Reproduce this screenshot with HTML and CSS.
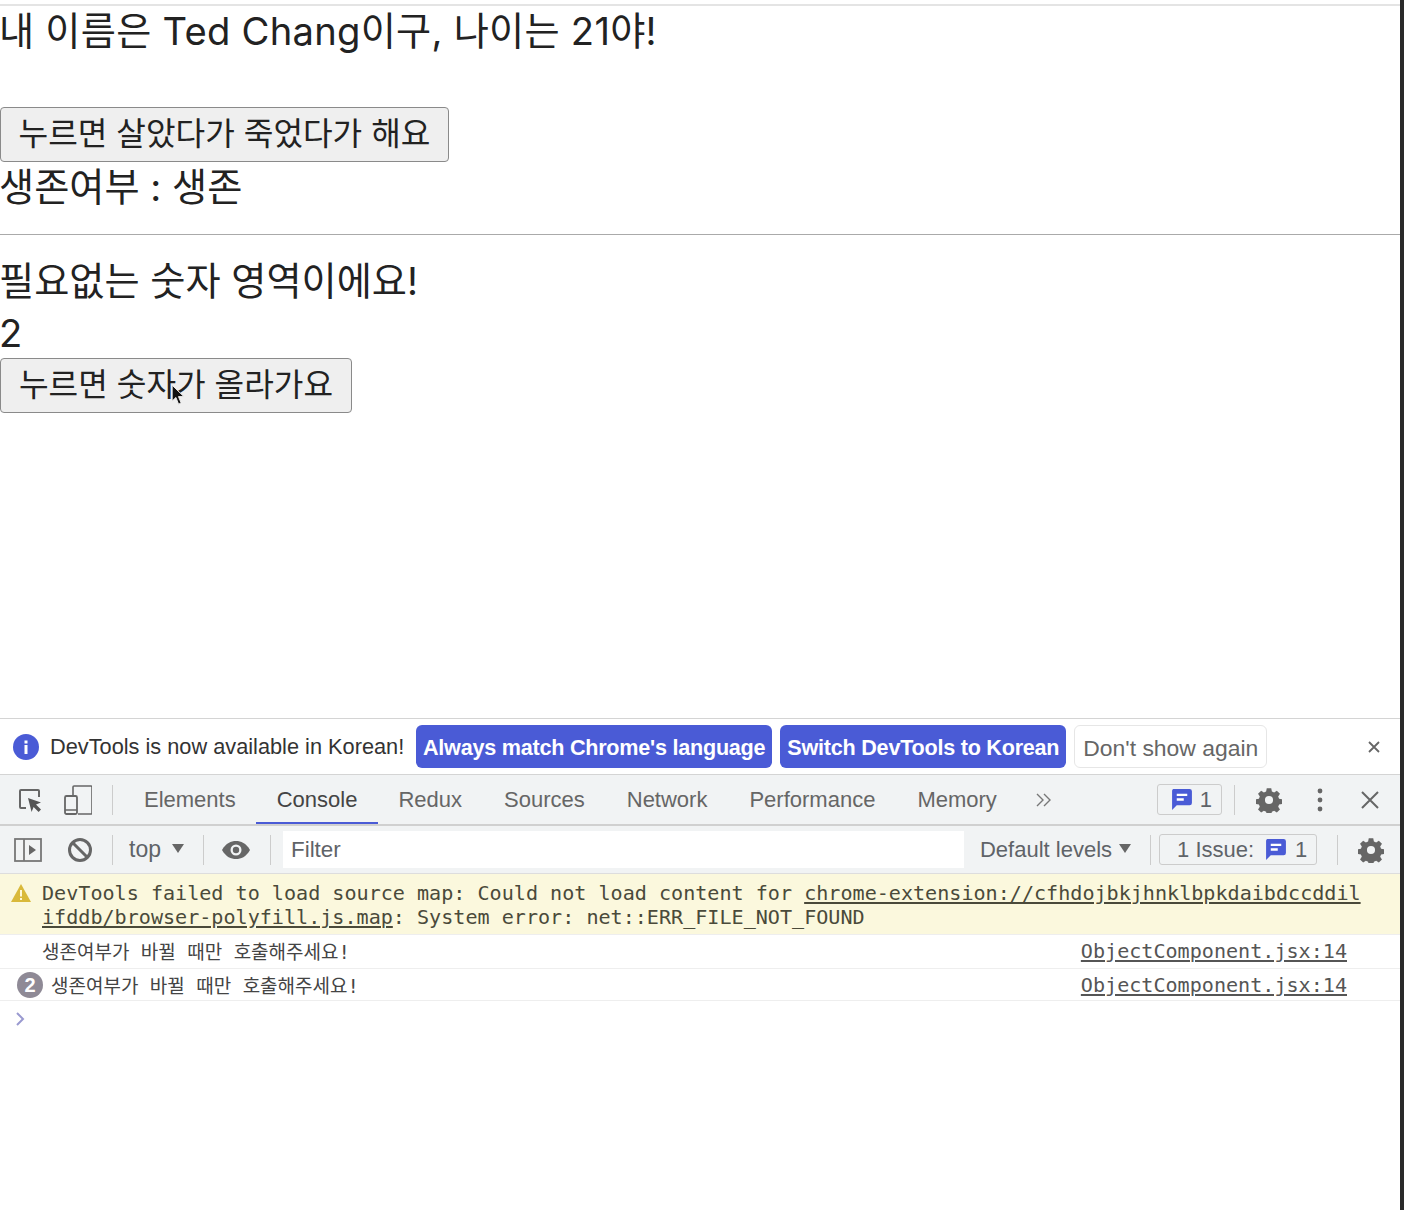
FILE: index.html
```html
<!DOCTYPE html>
<html lang="ko">
<head>
<meta charset="utf-8">
<title>DevTools</title>
<link rel="stylesheet" href="styles.css">
</head>
<body>
<div class="app">
  <main class="page">
    <hr class="rule first">
    <div class="line name">내 이름은 Ted Chang이구, 나이는 21야!</div>
    <button class="btn wide"><span class="btn-label">누르면 살았다가 죽었다가 해요</span></button>
    <div class="line status">생존여부 : 생존</div>
    <hr class="rule second">
    <div class="line note">필요없는 숫자 영역이에요!</div>
    <div class="line count">2</div>
    <button class="btn narrow"><span class="btn-label">누르면 숫자가 올라가요</span><svg class="cursor" viewBox="0 0 12 18" width="14" height="22" preserveAspectRatio="none"><path d="M1 1v13l3.200-3 2.300 5.500 2.200-1-2.300-5.200H11z" fill="#111" stroke="#eee" stroke-width=".8"/></svg></button>
  </main>
  <section class="devtools">
    <div class="infobar">
      <svg class="info-icon" viewBox="0 0 26 26" width="26" height="26"><circle cx="13" cy="13" r="13" fill="#4a5bd6"/><rect x="11.500" y="11" width="3" height="9" fill="#fff"/><rect x="11.500" y="6.500" width="3" height="3" fill="#fff"/></svg>
      <span class="info-text">DevTools is now available in Korean!</span>
      <span class="pill primary">Always match Chrome's language</span>
      <span class="pill primary">Switch DevTools to Korean</span>
      <span class="pill plain">Don't show again</span>
      <svg class="info-close" viewBox="0 0 12 12" width="12" height="12"><path d="M1 1l10 10M11 1L1 11" stroke="#666" stroke-width="1.800"/></svg>
    </div>
    <div class="tabs">
      <svg class="ti inspect" viewBox="0 0 26 26" width="26" height="26"><path d="M9 21H4a1 1 0 0 1-1-1V4a1 1 0 0 1 1-1h17a1 1 0 0 1 1 1v6" fill="none" stroke="#666" stroke-width="2"/><path d="M11 11l13 4.500-5 2 5 5-2.400 2.400-5-5-2 5z" fill="#555"/></svg>
      <svg class="ti device" viewBox="0 0 28 30" width="28" height="30"><path d="M9 10V2a1 1 0 0 1 1-1h17a1 1 0 0 1 1 1v26a1 1 0 0 1-1 1H14" fill="none" stroke="#666" stroke-width="1.600"/><rect x="1" y="11" width="12" height="18" rx="1.500" fill="none" stroke="#666" stroke-width="1.800"/><path d="M1 25h12" stroke="#666" stroke-width="1.500"/></svg>
      <span class="sep tab-sep"></span>
      <span class="tab t1">Elements</span>
      <span class="tab t2 active">Console</span>
      <span class="tab t3">Redux</span>
      <span class="tab t4">Sources</span>
      <span class="tab t5">Network</span>
      <span class="tab t6">Performance</span>
      <span class="tab t7">Memory</span>
      <svg class="more" viewBox="0 0 16 14" width="16" height="14"><path d="M1 1l6 6-6 6M8 1l6 6-6 6" fill="none" stroke="#777" stroke-width="1.400"/></svg>
      <span class="badge">
        <svg viewBox="2 1 17 18" width="20" height="21"><path d="M3 1h14a2 2 0 0 1 2 2v10a2 2 0 0 1-2 2H6l-4 4V3a2 2 0 0 1 1-2z" fill="#4a5bd6"/><path d="M6 6h9M6 10h6" stroke="#fff" stroke-width="2"/></svg>1
      </span>
      <span class="sep badge-sep"></span>
      <svg class="gear g1" viewBox="0 0 26 26" width="26" height="26"><use href="#gear"/></svg>
      <svg class="kebab" viewBox="0 0 6 24" width="6" height="24"><circle cx="3" cy="3" r="2.400" fill="#666"/><circle cx="3" cy="12" r="2.400" fill="#666"/><circle cx="3" cy="21" r="2.400" fill="#666"/></svg>
      <svg class="tab-close" viewBox="0 0 18 18" width="18" height="18"><path d="M1 1l16 16M17 1L1 17" stroke="#666" stroke-width="2"/></svg>
    </div>
    <div class="toolbar">
      <svg class="sidebar" viewBox="0 0 28 24" width="28" height="24"><rect x="1" y="1" width="26" height="22" fill="none" stroke="#777" stroke-width="1.800"/><path d="M10 1v22" stroke="#777" stroke-width="1.800"/><path d="M15 7l7 5-7 5z" fill="#666"/></svg>
      <svg class="block" viewBox="0 0 26 26" width="26" height="26"><circle cx="13" cy="13" r="10.500" fill="none" stroke="#666" stroke-width="3"/><path d="M5.500 5.500l15 15" stroke="#666" stroke-width="3"/></svg>
      <span class="sep s1"></span>
      <span class="ctx">top</span>
      <span class="tri t-top"></span>
      <span class="sep s2"></span>
      <svg class="eye" viewBox="0 0 30 20" width="30" height="20"><path d="M1 10C5 3 10 1 15 1s10 2 14 9c-4 7-9 9-14 9S5 17 1 10z" fill="#666"/><circle cx="15" cy="10" r="5.500" fill="#f1f3f4"/><circle cx="15" cy="10" r="3.200" fill="#666"/></svg>
      <span class="sep s3"></span>
      <span class="filter">Filter</span>
      <span class="levels">Default levels</span>
      <span class="tri t-lev"></span>
      <span class="sep s4"></span>
      <span class="issue">1 Issue:
        <svg viewBox="2 1 17 18" width="20" height="21"><path d="M3 1h14a2 2 0 0 1 2 2v10a2 2 0 0 1-2 2H6l-4 4V3a2 2 0 0 1 1-2z" fill="#4a5bd6"/><path d="M6 6h9M6 10h6" stroke="#fff" stroke-width="2"/></svg>1
      </span>
      <span class="sep s5"></span>
      <svg class="gear g2" viewBox="0 0 26 26" width="26" height="26"><use href="#gear"/></svg>
    </div>
    <div class="msg warn">
      <svg class="warn-icon" viewBox="0 0 20 18" width="20" height="18"><path d="M10 0l10 18H0z" fill="#d9b93a"/><rect x="9" y="6" width="2" height="6.500" fill="#fff8d8"/><rect x="9" y="14" width="2" height="2" fill="#fff8d8"/></svg>
      <div class="warn-text">DevTools failed to load source map: Could not load content for <u>chrome-extension://cfhdojbkjhnklbpkdaibdccddil<br>ifddb/browser-polyfill.js.map</u>: System error: net::ERR_FILE_NOT_FOUND</div>
    </div>
    <div class="msg log first-log">
      <span class="log-text">생존여부가 바뀔 때만 호출해주세요!</span>
      <u class="src">ObjectComponent.jsx:14</u>
    </div>
    <div class="msg log second-log">
      <span class="count-badge">2</span>
      <span class="log-text">생존여부가 바뀔 때만 호출해주세요!</span>
      <u class="src">ObjectComponent.jsx:14</u>
    </div>
    <div class="prompt">
      <svg viewBox="0 0 10 14" width="10" height="14"><path d="M2 1l6 6-6 6" fill="none" stroke="#9a9ad0" stroke-width="2"/></svg>
    </div>
  </section>
</div>
<svg class="defs" width="0" height="0"><defs><g id="gear"><path fill="#666" d="M10.500 0h5l.7 3.600 2.500 1 3-2 3.500 3.500-2 3 1 2.500 3.600.7v5l-3.600.7-1 2.500 2 3-3.500 3.500-3-2-2.500 1-.7 3.600h-5l-.7-3.600-2.500-1-3 2-3.500-3.500 2-3-1-2.500-3.600-.7v-5l3.600-.7 1-2.500-2-3 3.500-3.500 3 2 2.500-1zM13 8.500a4.500 4.500 0 1 0 0 9 4.500 4.500 0 0 0 0-9z" transform="translate(1.300 1.300) scale(.9)"/></g></defs></svg>
</body>
</html>
```
FILE: styles.css
```css
* { box-sizing: border-box; }
html, body { margin: 0; padding: 0; background: #fff; }
body {
  width: 1404px;
  height: 1210px;
  overflow: hidden;
  font-family: "Liberation Sans", "Noto Sans CJK KR", sans-serif;
}
.app {
  width: 1404px;
  height: 1210px;
  border-right: 4px solid #2a2a2a;
  display: flex;
  flex-direction: column;
}
.page { height: 718px; display: flex; flex-direction: column; align-items: flex-start; color: #222; }
.rule { width: 100%; margin: 0; border: 0; flex: none; }
.rule.first { margin-top: 4px; border-top: 2px solid #e4e4e4; }
.rule.second { margin-top: 20px; border-top: 1px solid #aaa; }
.line { font-family: Inter, "Noto Sans CJK KR", sans-serif; font-size: 38.200px; line-height: 50px; font-weight: 400; white-space: nowrap; }
.name { height: 101px; letter-spacing: .25px; margin-left: -1px; }
.status { height: 52px; margin-left: -1px; }
.note { margin-top: 21px; height: 52px; margin-left: -1px; }
.count { height: 50px; margin-left: -1px; }
.btn {
  position: relative;
  font: inherit;
  font-size: 32.200px;
  height: 55px;
  padding: 0 0 9px;
  margin: 0;
  background: #efefef;
  color: #222;
  border: 1px solid #8a8a8a;
  border-radius: 4px;
  white-space: nowrap;
  display: block;
}
.btn.wide { width: 449px; }
.btn.narrow { width: 352px; }
.cursor { position: absolute; left: 170px; top: 25px; }

.devtools { flex: 1; display: flex; flex-direction: column; font-size: 22px; color: #5f6368; }
.infobar {
  height: 57px;
  border-top: 1px solid #d4d4d4;
  border-bottom: 1px solid #d4d4d4;
  display: flex;
  align-items: center;
  padding-left: 13px;
}
.info-text { color: #333; margin-left: 11px; width: 366px; white-space: nowrap; font-size: 21.750px; }
.pill { height: 43px; border-radius: 6px; display: flex; align-items: center; white-space: nowrap; padding-top: 3px; }
.pill.primary { background: #4a5bd6; color: #fff; font-weight: 700; padding-left: 7px; padding-right: 7px; font-size: 21.600px; letter-spacing: -.24px; margin-right: 8px; }
.pill.plain { background: #fff; border: 1px solid #e6e6e6; padding-left: 8px; padding-right: 8px; color: #666; font-size: 22.900px; }
.info-close { margin-left: auto; margin-right: 20px; }

.tabs {
  height: 51px;
  background: #f1f3f4;
  border-bottom: 2px solid #d0d0d0;
  display: flex;
  align-items: center;
}
.ti.inspect { margin-left: 17px; }
.ti.device { margin-left: 21px; }
.sep { width: 1px; height: 30px; background: #ccc; flex: none; }
.tab-sep { margin-left: 20px; margin-right: 10px; }
.tab { height: 49px; padding: 0 21px; display: flex; align-items: center; white-space: nowrap; color: #666; }
.tab.active { color: #444; border-bottom: 2px solid #4a5bd6; padding-top: 2px; }
.t2, .t3 { margin-left: -1px; }
.more { margin-left: 18px; }
.badge { margin-left: 105px; width: 65px; height: 31px; border: 1px solid #ccc; border-radius: 3px; padding-left: 5px; display: flex; align-items: center; justify-content: center; gap: 8px; font-size: 22px; }
.badge-sep { margin-left: 12px; }
.g1 { margin-left: 21px; }
.kebab { margin-left: 35px; }
.tab-close { margin-left: 38px; }

.toolbar {
  height: 48px;
  background: #f1f3f4;
  border-bottom: 1px solid #ddd;
  display: flex;
  align-items: center;
}
.sidebar { margin-left: 14px; }
.block { margin-left: 25px; }
.s1 { margin-left: 19px; }
.ctx { margin-left: 16px; font-size: 23px; }
.tri { width: 0; height: 0; border-left: 6px solid transparent; border-right: 6px solid transparent; border-top: 9px solid #666; flex: none; }
.t-top { margin-left: 11px; margin-bottom: 3px; }
.s2 { margin-left: 19px; }
.eye { margin-left: 17px; }
.s3 { margin-left: 19px; }
.filter { margin-left: 12px; width: 681px; height: 37px; background: #fff; padding-left: 8px; display: flex; align-items: center; font-size: 22.400px; }
.levels { margin-left: 16px; white-space: nowrap; }
.t-lev { margin-left: 7px; margin-bottom: 3px; }
.s4 { margin-left: 19px; }
.issue { margin-left: 8px; width: 158px; height: 31px; border: 1px solid #ccc; border-radius: 3px; padding-left: 17px; display: flex; align-items: center; gap: 9px; white-space: nowrap; }
.issue svg { margin-left: 3px; }
.s5 { margin-left: 20px; }
.g2 { margin-left: 20px; }

.msg { display: flex; position: relative; font-family: "DejaVu Sans Mono", "Noto Sans CJK KR", monospace; font-size: 20.100px; color: #444; }
.warn { height: 61px; background: #fbf8dd; padding: 7px 0 0 42px; line-height: 24px; border-bottom: 1px solid #eee; white-space: nowrap; color: #4a4a3a; }
.warn-icon { position: absolute; left: 11px; top: 10px; }
.log { align-items: center; border-bottom: 1px solid #eee; justify-content: space-between; padding-right: 53px; }
.first-log { height: 34px; padding-left: 42px; padding-bottom: 2px; }
.second-log { height: 32px; padding-left: 17px; }
.log-text { font-size: 19px; font-weight: 400; }
.second-log .log-text { margin-left: 8px; margin-right: auto; }
.count-badge { width: 26px; height: 26px; border-radius: 50%; background: #8f8a96; color: #fff; font: 700 20px/26px "Liberation Sans", sans-serif; text-align: center; }
.src { color: #555; }
.prompt { padding: 5px 0 0 15px; }
.defs { position: absolute; }
```
